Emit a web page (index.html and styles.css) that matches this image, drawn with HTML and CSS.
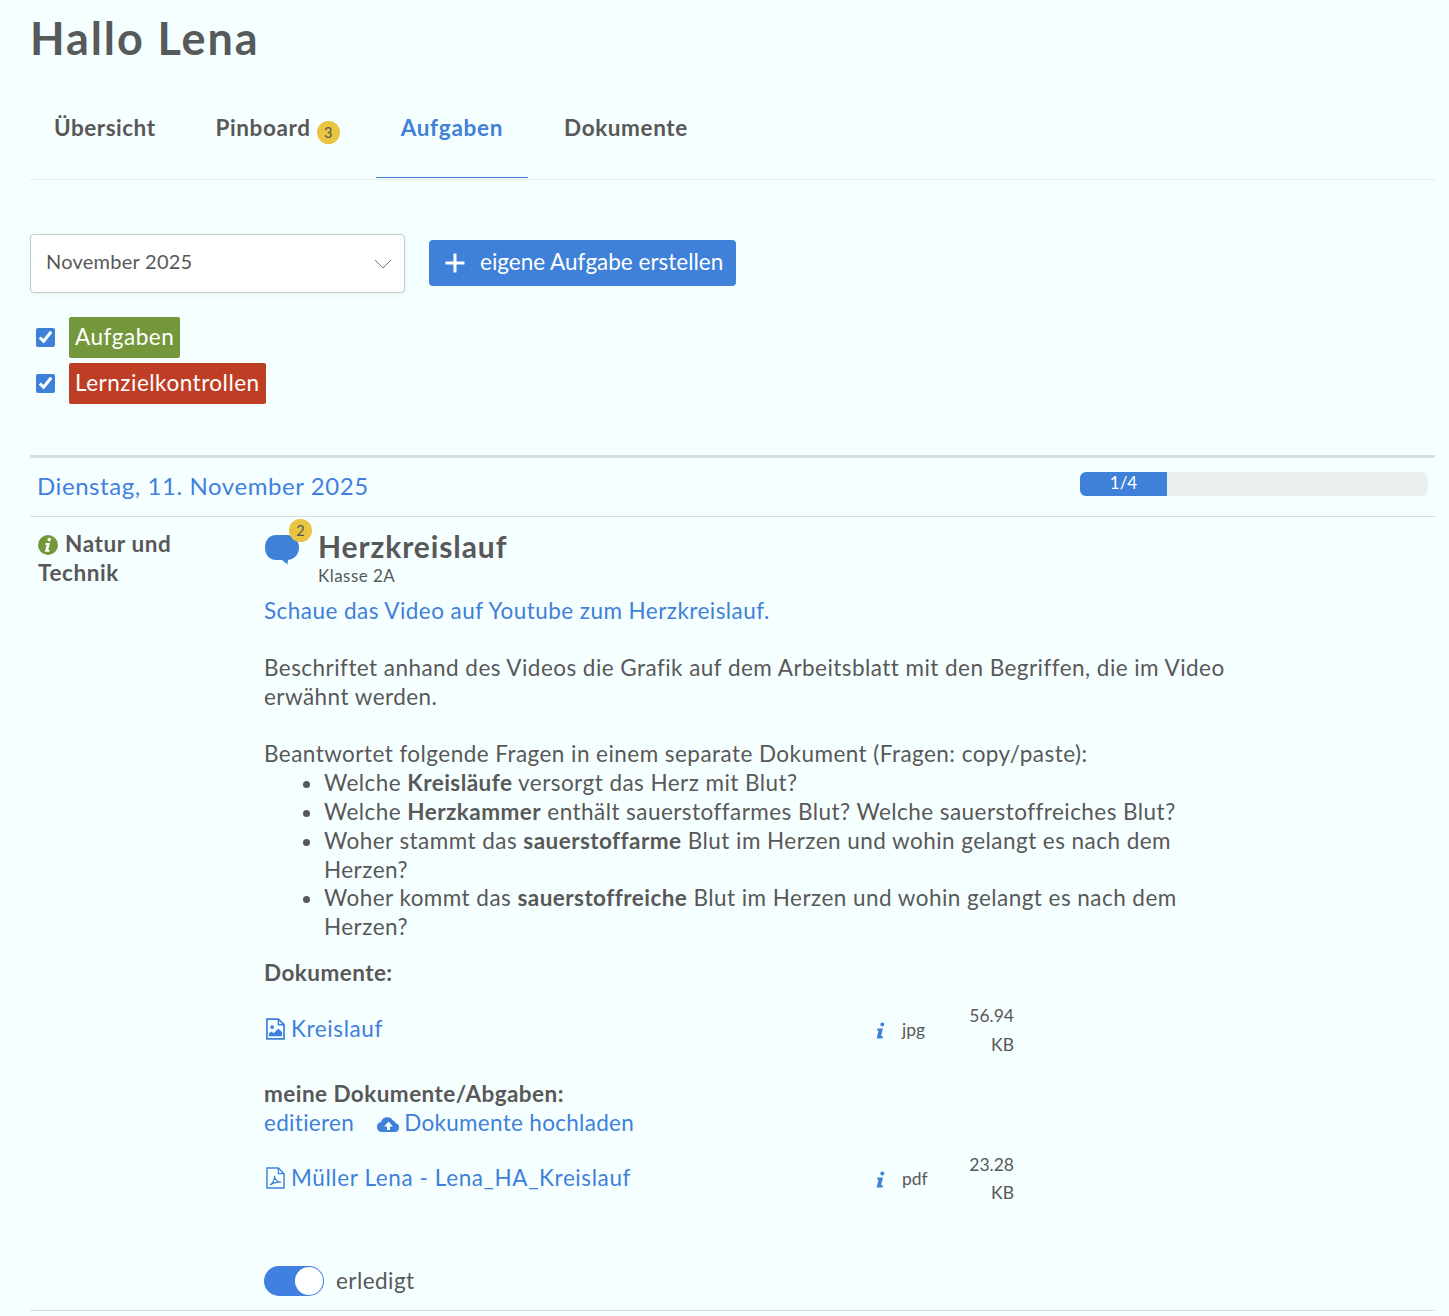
FILE: index.html
```html
<!DOCTYPE html>
<html lang="de">
<head>
<meta charset="utf-8">
<title>Hallo Lena</title>
<link rel="stylesheet" href="styles.css">
</head>
<body>
<h1 class="title">Hallo Lena</h1>
<nav class="tabs">
  <a class="tab">Übersicht</a>
  <a class="tab">Pinboard <span class="badge badge-tab">3</span></a>
  <a class="tab tab-active">Aufgaben</a>
  <a class="tab">Dokumente</a>
</nav>
<div class="controls">
  <div class="select">
    <span class="select-text">November 2025</span>
    <svg class="chev" width="18" height="10" viewBox="0 0 18 10"><path d="M1 1l8 8 8-8" fill="none" stroke="#777" stroke-width="1"/></svg>
  </div>
  <button class="btn">
    <svg width="20" height="20" viewBox="0 0 20 20"><path d="M10 .5v19M.5 10h19" stroke="#fff" stroke-width="3" fill="none"/></svg>
    <span>eigene Aufgabe erstellen</span>
  </button>
</div>
<div class="filters">
  <label class="filter"><input type="checkbox" checked><span class="tag tag-green">Aufgaben</span></label>
  <label class="filter"><input type="checkbox" checked><span class="tag tag-red">Lernzielkontrollen</span></label>
</div>
<section class="day">
  <header class="day-head">
    <h2 class="day-title">Dienstag, 11. November 2025</h2>
    <div class="progress"><div class="progress-fill">1/4</div></div>
  </header>
  <article class="task">
    <div class="subject">
      <svg class="subject-icon" width="20" height="20" viewBox="0 0 20 20"><circle cx="10" cy="10" r="10" fill="#75973c"/><path d="M11.2 2.800a1.800 1.800 0 1 1 0 3.600 1.800 1.800 0 0 1 0-3.600zM7.600 8h4.400l-1.800 7h1.500l-.4 1.800H6.800l1.800-7H7.200z" fill="#fff"/></svg>
      Natur und Technik
    </div>
    <div class="task-body">
      <div class="task-head">
        <div class="bubble">
          <svg width="36" height="34" viewBox="0 0 36 34"><path d="M12 4h11c7 0 12 5 12 12.500 0 7-5 12-11 12.500l-.5 4.500-5.500-4.500H12C5.500 29 1 24 1 16.500S5.500 4 12 4z" fill="#3f80d9"/></svg>
          <span class="badge badge-bubble">2</span>
        </div>
        <div class="task-heading">
          <h3 class="task-title">Herzkreislauf</h3>
          <div class="task-class">Klasse 2A</div>
        </div>
      </div>
      <div class="desc">
        <a class="link">Schaue das Video auf Youtube zum Herzkreislauf.</a>
        <p class="para">Beschriftet anhand des Videos die Grafik auf dem Arbeitsblatt mit den Begriffen, die im Video erwähnt werden.</p>
        <p class="para">Beantwortet folgende Fragen in einem separate Dokument (Fragen: copy/paste):</p>
        <ul class="questions">
          <li>Welche <b>Kreisläufe</b> versorgt das Herz mit Blut?</li>
          <li>Welche <b>Herzkammer</b> enthält sauerstoffarmes Blut? Welche sauerstoffreiches Blut?</li>
          <li>Woher stammt das <b>sauerstoffarme</b> Blut im Herzen und wohin gelangt es nach dem Herzen?</li>
          <li>Woher kommt das <b>sauerstoffreiche</b> Blut im Herzen und wohin gelangt es nach dem Herzen?</li>
        </ul>
      </div>
      <div class="doc-heading">Dokumente:</div>
      <div class="doc">
        <a class="link doc-name">
          <svg width="19" height="22" viewBox="0 1 20 23"><path d="M1 2h12l6 6v15H1z" fill="none" stroke="#3f80d9" stroke-width="1.800"/><path d="M13 2v6h6" fill="none" stroke="#3f80d9" stroke-width="1.500"/><circle cx="6.500" cy="10.500" r="2" fill="#3f80d9"/><path d="M3 20v-3l3-2 2 2 5-5 4 4v4z" fill="#3f80d9"/></svg>
          Kreislauf
        </a>
        <svg class="doc-info" width="10" height="17" viewBox="0 0 10 17"><path d="M6.300.500a2 2 0 1 1 0 4 2 2 0 0 1 0-4zM1.500 6.500h5.500l-2 7.500h1.800l-.4 2.500H.6l2-8H1z" fill="#3f80d9"/></svg>
        <span class="doc-type">jpg</span>
        <span class="doc-size">56.94 KB</span>
      </div>
      <div class="my-heading">meine Dokumente/Abgaben:</div>
      <div class="my-actions">
        <a class="link">editieren</a>
        <a class="link upload">
          <svg width="23" height="16" viewBox="0 0 23 16"><path d="M5 16a5 5 0 0 1-1-9.900A6.500 6.500 0 0 1 16 4.500a4 4 0 0 1 2.800 2.700A4.500 4.500 0 0 1 18 16z" fill="#3f80d9"/><path d="M11.500 5.500L7 10.500h3V14h3v-3.500h3z" fill="#f6ffff"/></svg>
          Dokumente hochladen
        </a>
      </div>
      <div class="doc">
        <a class="link doc-name">
          <svg width="19" height="22" viewBox="0 1 20 23"><path d="M1 2h12l6 6v15H1z" fill="none" stroke="#3f80d9" stroke-width="1.500"/><path d="M13 2v6h6" fill="none" stroke="#3f80d9" stroke-width="1.300"/><path d="M4 20c3-2 5-6 5-10 0 4 3 7 7 7-4-.5-8 0-12 3z" fill="none" stroke="#3f80d9" stroke-width="1.200"/></svg>
          Müller Lena - Lena_HA_Kreislauf
        </a>
        <svg class="doc-info" width="10" height="17" viewBox="0 0 10 17"><path d="M6.300.500a2 2 0 1 1 0 4 2 2 0 0 1 0-4zM1.500 6.500h5.500l-2 7.500h1.800l-.4 2.500H.6l2-8H1z" fill="#3f80d9"/></svg>
        <span class="doc-type">pdf</span>
        <span class="doc-size">23.28 KB</span>
      </div>
      <div class="done">
        <span class="switch"><span class="knob"></span></span>
        <span>erledigt</span>
      </div>
    </div>
  </article>
</section>
</body>
</html>
```

FILE: styles.css
```css
* { box-sizing: border-box; }
body {
  margin: 0;
  padding: 0 14px 0 30px;
  background: #f6ffff;
  color: #585858;
  font-family: "Lato", "Liberation Sans", sans-serif;
  font-size: 22.500px;
  line-height: 28.800px;
  letter-spacing: .45px;
  font-variant-ligatures: none;
}
.title {
  margin: 0;
  padding-top: 9px;
  height: 69px;
  font-size: 45px;
  line-height: 58px;
  font-weight: 700;
  letter-spacing: 1.900px;
  color: #565a5a;
}
.tabs {
  display: flex;
  height: 111px;
  border-bottom: 1px solid #e6ecec;
}
.tab {
  display: block;
  height: 109px;
  padding: 45px 25px 0;
  margin-right: 11px;
  font-weight: 700;
  font-size: 22.500px;
  letter-spacing: .6px;
}
.tab:first-child {
  margin-left: -1px;
  margin-right: 10px;
  letter-spacing: .5px;
}
.tab-active {
  color: #3f80d9;
  border-bottom: 1px solid #3f80d9;
  letter-spacing: .7px;
}
.badge {
  display: inline-block;
  width: 23px;
  height: 23px;
  border-radius: 50%;
  background: #e9c440;
  color: #555;
  font-size: 14.500px;
  font-weight: 400;
  line-height: 23px;
  letter-spacing: 0;
  text-align: center;
}
.badge-tab { vertical-align: -2px; }
.controls {
  display: flex;
  align-items: flex-start;
  gap: 24px;
  margin-top: 54px;
}
.select {
  display: flex;
  align-items: center;
  justify-content: space-between;
  width: 375px;
  height: 59px;
  padding: 0 12px 5px 15px;
  border: 1px solid #c4c9c9;
  border-radius: 4px;
  background: #fff;
  font-size: 20px;
  letter-spacing: .25px;
  box-shadow: 0 1px 6px rgba(0,0,0,.06);
}
.chev { margin-top: 5px; }
.btn {
  display: flex;
  align-items: center;
  gap: 15px;
  height: 46px;
  width: 307px;
  margin-top: 6px;
  padding: 0 0 0 16px;
  border: 0;
  border-radius: 4px;
  background: #3f80d9;
  color: #fff;
  font: inherit;
  letter-spacing: 0;
  white-space: nowrap;
}
.btn span { margin-top: -2px; }
.filters {
  margin-top: 24px;
  display: flex;
  flex-direction: column;
  gap: 5.500px;
}
.filter {
  display: flex;
  align-items: center;
  padding-left: 6px;
}
.filter input {
  width: 19px;
  height: 19px;
  margin: 0 14px 0 0;
  accent-color: #3f80d9;
}
.tag {
  height: 40.500px;
  padding: 0 6px;
  border-radius: 2px;
  color: #fff;
  line-height: 39px;
  letter-spacing: .5px;
}
.tag-green { background: #75973c; }
.tag-red { background: #be3d25; }
.day {
  margin-top: 51.500px;
  border-top: 3px solid #d8dfe0;
}
.day-head {
  display: flex;
  align-items: flex-start;
  justify-content: space-between;
  height: 59px;
  padding: 14px 7px 0 7px;
  border-bottom: 1px solid #d8dfe0;
}
.day-title {
  margin: 0;
  color: #3f80e0;
  font-size: 24px;
  font-weight: 400;
  letter-spacing: .57px;
}
.progress {
  width: 348px;
  height: 24px;
  border-radius: 6px;
  background: #e9f0ef;
  overflow: hidden;
}
.progress-fill {
  width: 87px;
  height: 24px;
  background: #3f80d9;
  color: #fff;
  font-size: 17px;
  letter-spacing: 0;
  line-height: 22px;
  text-align: center;
}
.task {
  display: flex;
  height: 794px;
  border-bottom: 1px solid #d8dfe0;
}
.subject {
  width: 234px;
  flex: none;
  padding: 13px 60px 0 8px;
  font-weight: 700;
  letter-spacing: .6px;
}
.subject-icon { vertical-align: -3px; margin-right: 1px; }
.task-body {
  flex: 1;
  min-width: 0;
}
.task-head {
  display: flex;
  gap: 19px;
  height: 79.500px;
  padding-top: 14px;
}
.task-heading { margin-top: -2px; }
.bubble {
  position: relative;
  width: 35px;
  height: 33px;
}
.badge-bubble {
  position: absolute;
  left: 25px;
  top: -12px;
}
.task-title {
  margin: 0;
  font-size: 30px;
  line-height: 34px;
  font-weight: 700;
  letter-spacing: .9px;
}
.task-class {
  font-size: 17px;
  line-height: 25px;
}
.link { color: #3f80d9; }
.desc { width: 970px; }
.para { margin: 28.800px 0 0; }
.questions {
  margin: 0;
  padding-left: 60px;
}
.doc-heading {
  margin-top: 17px;
  font-weight: 700;
}
.doc {
  display: flex;
  align-items: center;
  width: 750px;
  height: 58px;
  margin-top: 14px;
}
.doc-name {
  display: flex;
  align-items: center;
  gap: 6px;
  width: 612px;
  margin-bottom: 3px;
  padding-left: 2px;
  letter-spacing: .6px;
}
.doc-info { flex: none; margin-right: 16px; }
.doc-type {
  flex: none;
  width: 48px;
  font-size: 17.500px;
  letter-spacing: 0;
}
.doc-size {
  width: 64px;
  text-align: right;
  font-size: 17.500px;
  letter-spacing: 0;
}
.my-heading {
  margin-top: 20px;
  font-weight: 700;
}
.my-actions {
  display: flex;
  gap: 23px;
  letter-spacing: .3px;
}
.upload svg { vertical-align: -1px; margin-right: -2px; }
.my-actions + .doc { margin-top: 13px; }
.done {
  display: flex;
  align-items: center;
  gap: 12px;
  margin-top: 58px;
}
.switch {
  display: block;
  position: relative;
  width: 60px;
  height: 30px;
  border-radius: 15px;
  background: #3f80e0;
}
.knob {
  position: absolute;
  right: 1px;
  top: 1px;
  width: 28px;
  height: 28px;
  border-radius: 50%;
  background: #fff;
}
```
